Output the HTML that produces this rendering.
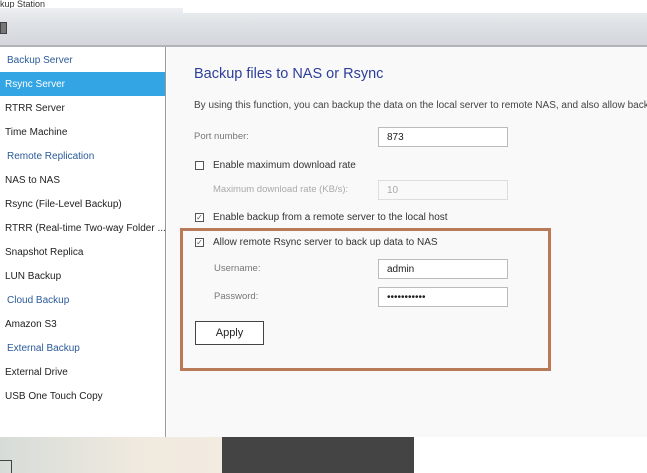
<!DOCTYPE html>
<html><head><style>
*{margin:0;padding:0;box-sizing:border-box}
body{width:647px;height:473px;overflow:hidden;background:#fff;font-family:"Liberation Sans",sans-serif;position:relative;font-size:10px;color:#333}
.abs{position:absolute}
.nav{left:0;top:47px;width:166px;height:390px;background:#fff;border-right:1px solid #999}
.nav div{position:absolute;left:5px;font-size:10px;color:#222;white-space:nowrap}
.nav .h{color:#2a5a9a;left:7px}
.cont{left:167px;top:47px;width:480px;height:390px;background:#f9f9f9}
.lbl{position:absolute;font-size:9.5px;color:#777;white-space:nowrap}
.txt{position:absolute;font-size:10px;color:#333;white-space:nowrap}
.inp{position:absolute;background:#fff;border:1px solid #bbb;height:20px;font-size:10px;padding:4px 8px;color:#222}
.cb{position:absolute;width:9px;height:9px;border:1px solid #555;background:#fff;font-size:8px;line-height:7px;text-align:center;color:#555}
</style></head><body>
<div class="abs" style="left:0;top:0;width:183px;height:9px;font-size:9px;color:#333;line-height:9px;">kup Station</div>
<div class="abs" style="left:0;top:8px;width:647px;height:37px;background:linear-gradient(#eef0f2,#dfe2e6 40%,#d3d7dc)"></div>
<div class="abs" style="left:183px;top:8px;width:464px;height:5px;background:#fff"></div>
<div class="abs" style="left:0;top:45px;width:647px;height:2px;background:#b0b3b8"></div>
<div class="abs" style="left:0;top:22px;width:7px;height:12px;background:#777;border:1px solid #444"></div>
<div class="abs nav">
<div class="h" style="top:8px">Backup Server</div>
<div style="left:0;top:25px;width:165px;height:24px;background:#33a4e4"></div>
<div style="top:32px;color:#fff">Rsync Server</div>
<div style="top:56px">RTRR Server</div>
<div style="top:80px">Time Machine</div>
<div class="h" style="top:104px">Remote Replication</div>
<div style="top:128px">NAS to NAS</div>
<div style="top:152px">Rsync (File-Level Backup)</div>
<div style="top:176px">RTRR (Real-time Two-way Folder ...</div>
<div style="top:200px">Snapshot Replica</div>
<div style="top:224px">LUN Backup</div>
<div class="h" style="top:248px">Cloud Backup</div>
<div style="top:272px">Amazon S3</div>
<div class="h" style="top:296px">External Backup</div>
<div style="top:320px">External Drive</div>
<div style="top:344px">USB One Touch Copy</div>
</div>
<div class="abs cont">
<div class="abs" style="left:27px;top:19px;font-size:14.5px;color:#2d3f9a">Backup files to NAS or Rsync</div>
<div class="txt" style="left:27px;top:53px;color:#444">By using this function, you can backup the data on the local server to remote NAS, and also allow backup</div>
<div class="lbl" style="left:27px;top:84px">Port number:</div>
<div class="inp" style="left:211px;top:80px;width:130px">873</div>
<div class="cb" style="left:28px;top:114px"></div>
<div class="txt" style="left:46px;top:113px">Enable maximum download rate</div>
<div class="lbl" style="left:46px;top:137px;color:#aaa">Maximum download rate (KB/s):</div>
<div class="inp" style="left:211px;top:133px;width:130px;background:#f9f9f9;border-color:#ddd;color:#aaa">10</div>
<div class="cb" style="left:28px;top:166px">✓</div>
<div class="txt" style="left:46px;top:165px">Enable backup from a remote server to the local host</div>
<div class="cb" style="left:28px;top:191px">✓</div>
<div class="txt" style="left:46px;top:190px">Allow remote Rsync server to back up data to NAS</div>
<div class="lbl" style="left:47px;top:216px">Username:</div>
<div class="inp" style="left:211px;top:212px;width:130px">admin</div>
<div class="lbl" style="left:47px;top:244px">Password:</div>
<div class="inp" style="left:211px;top:240px;width:130px">•••••••••••</div>
<div class="abs" style="left:28px;top:274px;width:69px;height:24px;border:1px solid #444;background:#fff;font-size:11px;text-align:center;line-height:22px;color:#222">Apply</div>
</div>
<div class="abs" style="left:180px;top:228px;width:371px;height:143px;border:3px solid #b87a58"></div>
<div class="abs" style="left:0;top:437px;width:222px;height:36px;background:linear-gradient(90deg,#d6dcd8,#efe9df 60%,#f3ebe0)"></div>
<div class="abs" style="left:0;top:460px;width:12px;height:13px;border-top:1px solid #444;border-right:1px solid #444"></div>
<div class="abs" style="left:222px;top:437px;width:192px;height:36px;background:#444"></div>
</body></html>
